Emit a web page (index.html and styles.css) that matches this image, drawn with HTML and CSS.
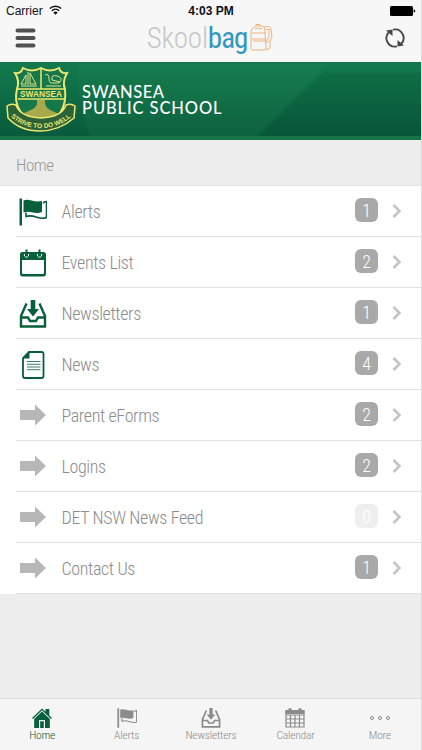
FILE: index.html
```html
<!DOCTYPE html>
<html lang="en">
<head>
  <meta charset="UTF-8">
  <title>Skoolbag</title>
  <link rel="stylesheet" href="styles.css">
</head>
<body>
  <!-- shared icons -->
  <svg class="defs">
    <symbol id="flag" viewBox="0 0 28 28">
      <path d="M.5.500h2.500v27H.5z" fill="currentColor"/>
      <path d="M4.500 2.500C10 0 14 5 23 3v11c-8 3-12-2-18.500.500z" fill="currentColor"/>
      <path d="M24.500 5.500c0-1.500 1-2 3-2v16c-7 3.500-12-4-20.500-1v-4" fill="none" stroke="currentColor" stroke-width="1.600"/>
    </symbol>
    <symbol id="tray" viewBox="0 0 28 28">
      <path d="M7.500 3.500L2 16v10.500h24V16L20.500 3.500M2 17.500h7l2 3.500h6l2-3.500h7" fill="none" stroke="currentColor" stroke-width="2.400"/>
      <path d="M11.700 0h4.600v9h3.700l-6 7.500L8 9h3.700z" fill="currentColor"/>
    </symbol>
    <symbol id="arrow" viewBox="0 0 28 24">
      <path d="M1 7h15V1.500L27 12 16 22.500V17H1z" fill="currentColor"/>
    </symbol>
    <symbol id="chevron" viewBox="0 0 10 14">
      <path d="M1.500 1l6 6-6 6" fill="none" stroke="currentColor" stroke-width="2.500"/>
    </symbol>
  </svg>

  <header>
    <div class="status">
      <span class="carrier">Carrier
        <svg width="13" height="10" viewBox="0 0 13 10"><path d="M.8 3.500a8.200 8.200 0 0 1 11.400 0M2.800 5.700a5.400 5.400 0 0 1 7.400 0" fill="none" stroke="#111" stroke-width="1.400"/><path d="M4.300 7.400a3.300 3.300 0 0 1 4.400 0L6.500 9.800z" fill="#111"/></svg>
      </span>
      <span class="time">4:03 PM</span>
      <svg class="battery" width="26" height="10" viewBox="0 0 26 10"><rect width="23" height="10" rx="1.500"/><path d="M23.700 3.300q1.600.500 1.600 1.700t-1.600 1.700z"/></svg>
    </div>
    <div class="toolbar">
      <svg width="22" height="20" viewBox="0 0 22 20"><path d="M3.500 2.500h16M3.500 10h16M3.500 17.500h16" stroke="#505050" stroke-width="4" stroke-linecap="round"/></svg>
      <div class="logo">
        <span class="logo-text"><span>Skool</span><b>bag</b></span>
        <svg width="24" height="28" viewBox="0 0 24 28" fill="none" stroke="#eeb27e" stroke-width="1">
          <path d="M3 4Q8 0 14 3l1 4 1 18-2 1H3q-2 0-2-2V9q0-4 2-5zM2 9h13M2 15h13M3 17h12M5 5q3-2 7 0M6 2V.500h4V2M14 3q6-2 7 2l1 8-2 4v7l-4 2M16 6l3-1v8l-3 4M16 19l3-2"/>
        </svg>
      </div>
      <svg width="20" height="20" viewBox="0 0 20 20">
        <path d="M12 18.300A8.500 8.500 0 0 1 4 4M8 1.700A8.500 8.500 0 0 1 16 16" fill="none" stroke="#484848" stroke-width="1.900"/>
        <path d="M1 2.500l6.500-1V8zM19 17.500l-6.500 1V12z" fill="#484848"/>
      </svg>
    </div>
  </header>

  <div class="banner">
    <svg class="banner-bg" viewBox="0 0 421 70" preserveAspectRatio="none">
      <path d="M78 0h250L257 70H90Q75 30 78 0z" fill="#2c9360" opacity=".13"/>
      <path d="M323 8h98v62H260z" fill="#003828" opacity=".13"/>
    </svg>
    <svg class="crest" width="70" height="66" viewBox="0 0 70 66">
      <path d="M9 7q6 1 8-5 9 5 18 0 9 5 18 0 2 6 8 5-5 9-2 16 3 28-24 38Q5 48 11 23 14 15 9 7z" fill="#16784a" stroke="#ede66f" stroke-width="2"/>
      <path d="M35 3v20M12 23h46M12 33h46" stroke="#ede66f" stroke-width="1.500"/>
      <path d="M22 6v13M20 9l-5 9h5zM24 7l6 11h-6zM15 20h16" fill="none" stroke="#dfe487"/>
      <path d="M39 9q4-2 4 4 0 3 2 4h8q5-5-2-7-6-2-5 4l8 2M40 20h15" fill="none" stroke="#dfe487"/>
      <path d="M31 34h8q-1 7 5 10l9 4-10 9H25l-9-9 11-5q5-3 4-9z" fill="#a8a94c"/>
      <text x="35" y="31.200" textLength="42" lengthAdjust="spacingAndGlyphs" class="crest-name">SWANSEA</text>
      <path d="M1 40q4-3 9-1 4 12 25 13 21-1 25-13 5-2 9 1l-1 12q-15 13-34 13Q14 65 2 52z" fill="#2c6238" stroke="#ede66f" stroke-width="1.500"/>
      <path id="ribbon" d="M4 50q12 12 31 12t31-12" fill="none"/>
      <text class="crest-motto"><textPath href="#ribbon" startOffset="1" textLength="66">STRIVE TO DO WELL</textPath></text>
    </svg>
    <h1><span>SWANSEA</span><span class="wide">PUBLIC SCHOOL</span></h1>
  </div>

  <h2>Home</h2>

  <ul class="menu">
    <li>
      <svg class="icon green"><use href="#flag"/></svg>
      <div class="row"><span>Alerts</span><span class="badge">1</span><svg class="chevron"><use href="#chevron"/></svg></div>
    </li>
    <li>
      <svg class="icon green" viewBox="0 0 28 28">
        <path fill-rule="evenodd" d="M3.500 3h21q2.500 0 2.500 2.500v19q0 3-2.500 3h-21Q1 27.500 1 24.500v-19Q1 3 3.500 3zM3 11v12.500q0 1.500 1 1.500h20q1 0 1-1.500V11z" fill="currentColor"/>
        <path d="M5.500 5a2.200 2.200 0 1 0 4 0M18.500 5a2.200 2.200 0 1 0 4 0" fill="none" stroke="#fff"/>
        <path d="M7.500.500v6M20.500.500v6" stroke="currentColor" stroke-width="2"/>
      </svg>
      <div class="row"><span>Events List</span><span class="badge">2</span><svg class="chevron"><use href="#chevron"/></svg></div>
    </li>
    <li>
      <svg class="icon green"><use href="#tray"/></svg>
      <div class="row"><span>Newsletters</span><span class="badge">1</span><svg class="chevron"><use href="#chevron"/></svg></div>
    </li>
    <li>
      <svg class="icon green" viewBox="0 0 28 28">
        <path d="M10 1h12.500q2 0 2 2v22q0 2-2 2H6q-2 0-2-2V7z" fill="none" stroke="currentColor" stroke-width="1.800"/>
        <path d="M4 7.500L10.500 1v6.500z" fill="currentColor"/>
        <path d="M8 10.500h13.500M8 13.300h13.500M8 16h13.500M8 18.700h13.500" stroke="currentColor" stroke-width=".8"/>
      </svg>
      <div class="row"><span>News</span><span class="badge">4</span><svg class="chevron"><use href="#chevron"/></svg></div>
    </li>
    <li>
      <svg class="icon grey"><use href="#arrow"/></svg>
      <div class="row"><span>Parent eForms</span><span class="badge">2</span><svg class="chevron"><use href="#chevron"/></svg></div>
    </li>
    <li>
      <svg class="icon grey"><use href="#arrow"/></svg>
      <div class="row"><span>Logins</span><span class="badge">2</span><svg class="chevron"><use href="#chevron"/></svg></div>
    </li>
    <li>
      <svg class="icon grey"><use href="#arrow"/></svg>
      <div class="row"><span>DET NSW News Feed</span><span class="badge empty">0</span><svg class="chevron"><use href="#chevron"/></svg></div>
    </li>
    <li>
      <svg class="icon grey"><use href="#arrow"/></svg>
      <div class="row"><span>Contact Us</span><span class="badge">1</span><svg class="chevron"><use href="#chevron"/></svg></div>
    </li>
  </ul>

  <nav>
    <a class="active">
      <svg viewBox="0 0 20 20"><path d="M0 10L10 .5l3.500 3.300V1h3.800v6.500L20 10l-1 1-9-8.700L1 11z" fill="currentColor"/><path fill-rule="evenodd" d="M10 3.500l7.800 7.500v9H2.200v-9zM7 12v8h1.200v-6.800h3.600V20H13v-8z" fill="currentColor"/></svg>
      <span>Home</span>
    </a>
    <a><svg><use href="#flag"/></svg><span>Alerts</span></a>
    <a><svg><use href="#tray"/></svg><span>Newsletters</span></a>
    <a>
      <svg viewBox="0 0 20 20"><path d="M1 3h18v16H1zM1 7h18M1 11h18M1 15h18M5.500 7v12M10 7v12M14.500 7v12" fill="none" stroke="currentColor" stroke-width="1.200"/><path d="M.5 2h3V.3h3V2h7V.3h3V2h3v4H.5z" fill="currentColor"/></svg>
      <span>Calendar</span>
    </a>
    <a>
      <svg viewBox="0 0 20 20" fill="none" stroke="currentColor"><circle cx="2" cy="10" r="1.500"/><circle cx="10" cy="10" r="1.500"/><circle cx="18" cy="10" r="1.500"/></svg>
      <span>More</span>
    </a>
  </nav>
</body>
</html>
```
FILE: styles.css
```css
* {
  box-sizing: border-box;
}
body {
  margin: 0;
  width: 422px;
  height: 750px;
  display: flex;
  flex-direction: column;
  background: #ededed;
  border-right: 1px solid #dcdcdc;
  font-family: "Roboto Condensed", Roboto, sans-serif;
  font-stretch: 75%;
  font-weight: 300;
  overflow: hidden;
}
.defs {
  display: none;
}
svg {
  flex: none;
}
header {
  height: 62px;
  background: #f7f7f7;
}
.status {
  height: 22px;
  display: grid;
  grid-template-columns: 1fr auto 1fr;
  align-items: center;
  padding: 0 5px 0 6px;
  font: 12px "Liberation Sans", Arial, sans-serif;
  color: #111;
}
.carrier svg {
  margin-left: 3px;
}
.time {
  font-weight: bold;
}
.battery {
  justify-self: end;
}
.toolbar {
  height: 32px;
  display: flex;
  align-items: center;
  justify-content: space-between;
  padding: 0 16px 0 14px;
}
.logo {
  display: flex;
  align-items: center;
  gap: 3px;
}
.logo-text {
  font-size: 29px;
  line-height: 32px;
  letter-spacing: -0.2px;
  color: #c6c6c6;
}
.logo-text b {
  color: #3096bd;
  font-weight: 400;
  letter-spacing: -1px;
}
.banner {
  position: relative;
  height: 78px;
  display: flex;
  align-items: center;
  border-top: 2px solid #15764e;
  border-bottom: 4px solid #147348;
  background: linear-gradient(#127a4d, #095b3b);
}
.banner-bg {
  position: absolute;
  left: 0;
  top: 0;
  width: 100%;
  height: 100%;
}
.crest {
  position: relative;
  margin: 0 0 2px 6px;
}
.crest-name {
  font: bold 9px "Liberation Sans", sans-serif;
  fill: #ede66f;
  text-anchor: middle;
}
.crest-motto {
  font: bold 6.5px "Liberation Sans", sans-serif;
  fill: #ede66f;
}
h1 {
  position: relative;
  display: flex;
  flex-direction: column;
  margin: 0 0 1px 6px;
  font: 500 16.5px/16px Lato, sans-serif;
  letter-spacing: 0.5px;
  color: #fff;
}
.wide {
  letter-spacing: 0.9px;
}
h2 {
  height: 46px;
  margin: 0;
  padding: 2px 0 0 16px;
  border-bottom: 1px solid #e4e4e4;
  font-size: 17px;
  font-weight: 300;
  letter-spacing: -0.5px;
  line-height: 46px;
  color: #999;
}
.menu {
  margin: 0;
  padding: 0;
  list-style: none;
  background: #fff;
}
.menu li {
  height: 51px;
  display: flex;
  align-items: center;
  padding-left: 16px;
}
.icon {
  width: 28px;
  height: 28px;
  margin: 0 14px 0 3px;
}
.green {
  color: #075f3b;
}
.grey {
  height: 24px;
  margin-bottom: 1px;
  color: #b7b7b7;
}
.row {
  flex: 1;
  height: 51px;
  display: flex;
  align-items: center;
  margin-left: -45px;
  padding: 0 19px 0 45.5px;
  border-bottom: 1px solid #dfe1e1;
  font-size: 18px;
  letter-spacing: -0.37px;
  color: #8c8c8c;
}
.badge {
  width: 23px;
  height: 24px;
  margin: -3px 14px 0 auto;
  border-radius: 6px;
  background: #a9a9a9;
  color: #fff;
  text-align: center;
  line-height: 25px;
}
.badge.empty {
  background: #efefef;
}
.chevron {
  width: 10px;
  height: 14px;
  color: #c4c4c4;
}
nav {
  height: 52px;
  margin: auto -1px 0 0;
  display: flex;
  border-top: 1px solid #dcdcdc;
  background: #f5f5f5;
}
nav a {
  flex: 1;
  display: flex;
  flex-direction: column;
  align-items: center;
  padding-top: 9px;
  font-size: 11.5px;
  line-height: 14px;
  letter-spacing: -0.2px;
  color: #8b8b8b;
}
nav svg {
  width: 20px;
  height: 20px;
}
nav .active {
  color: #075f3b;
}
```
